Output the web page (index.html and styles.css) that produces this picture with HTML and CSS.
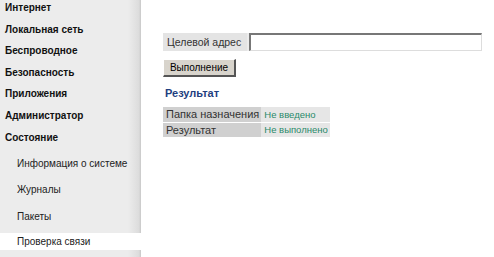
FILE: index.html
```html
<!DOCTYPE html>
<html lang="ru">
<head>
    <meta charset="UTF-8">
    <title>Проверка связи</title>
    <link rel="stylesheet" href="styles.css">
</head>
<body>
    <div id="page">
        <!-- Menu -->
        <div class="menu">
            <div class="menu-item">Интернет</div>
            <div class="menu-item">Локальная сеть</div>
            <div class="menu-item">Беспроводное</div>
            <div class="menu-item">Безопасность</div>
            <div class="menu-item">Приложения</div>
            <div class="menu-item">Администратор</div>
            <div class="menu-item">Состояние</div>
            <div class="sub-item">Информация о системе</div>
            <div class="sub-item">Журналы</div>
            <div class="sub-item">Пакеты</div>
            <div class="sub-item active">Проверка связи</div>
        </div>

        <!-- Content -->
        <div class="content">
            <div class="field-row">
                <span class="field-label">Целевой адрес</span>
                <input type="text" class="field-input">
            </div>
            <div class="action-bar">
                <button class="run-btn">Выполнение</button>
            </div>
            <div class="section-title">Результат</div>
            <table class="result-table">
                <tr>
                    <td class="cell-name">Папка назначения</td>
                    <td class="cell-value">Не введено</td>
                </tr>
                <tr>
                    <td class="cell-name">Результат</td>
                    <td class="cell-value">Не выполнено</td>
                </tr>
            </table>
        </div>
    </div>
</body>
</html>
```

FILE: styles.css
```css
body {
    margin: 0;
    padding: 0;
    background: #fff;
    font-family: "Liberation Sans", Arial, sans-serif;
}
#page {
    display: flex;
    min-height: 257px;
}
.menu {
    width: 141px;
    flex-shrink: 0;
    background: linear-gradient(to right, #ececec 0, #ececec 128px, #dcdcdc 139px, #c8c8c8 141px);
    display: flex;
    flex-direction: column;
    padding-top: 1px;
}
.menu-item {
    height: 21.6px;
    line-height: 14px;
    padding-left: 5px;
    font-size: 10px;
    font-weight: bold;
    color: #111;
    white-space: nowrap;
}
.sub-item {
    height: 26.3px;
    line-height: 14px;
    padding-left: 17px;
    padding-top: 5px;
    box-sizing: border-box;
    font-size: 10px;
    color: #222;
    white-space: nowrap;
}
.sub-item.active {
    background: #fff;
    height: 17px;
    padding-top: 2px;
    margin-top: 2px;
}
.content {
    flex: 1;
    padding: 33px 12px 0 22px;
    display: flex;
    flex-direction: column;
    align-items: flex-start;
}
.field-row {
    display: flex;
    align-self: stretch;
    height: 18px;
    background: #ececec;
}
.field-label {
    width: 84px;
    box-sizing: border-box;
    padding: 0 4px;
    font-size: 10.5px;
    line-height: 18px;
    color: #333;
    background: #e4e4e4;
    white-space: nowrap;
}
.field-input {
    flex: 1;
    margin: 0 0 0 2px;
    height: 18px;
    box-sizing: border-box;
    border: 1px solid #ddd;
    border-top: 2px solid #777;
    border-left: 2px solid #777;
    background: #fff;
    padding: 0;
}
.action-bar {
    margin-top: 8px;
}
.run-btn {
    display: block;
    width: 73px;
    height: 18px;
    padding: 0;
    border: 1px solid #fff;
    border-right: 2px solid #555;
    border-bottom: 2px solid #555;
    background: #d8d4cc;
    font-family: "Liberation Sans", Arial, sans-serif;
    font-size: 10px;
    color: #000;
}
.section-title {
    margin-top: 9px;
    padding-left: 2px;
    font-size: 11px;
    line-height: 14px;
    font-weight: bold;
    color: #1f3f7f;
}
.result-table {
    margin-top: 7px;
    border-collapse: collapse;
}
.result-table td {
    height: 15px;
    padding: 0 2px 0 3px;
    border-bottom: 1px solid #fff;
    white-space: nowrap;
    box-sizing: border-box;
}
.cell-name {
    width: 98px;
    background: #d0d0d0;
    font-size: 11px;
    color: #333;
}
.cell-value {
    width: 65px;
    background: #e6e6e6;
    font-size: 9.5px;
    color: #2a8a6a;
}
```
